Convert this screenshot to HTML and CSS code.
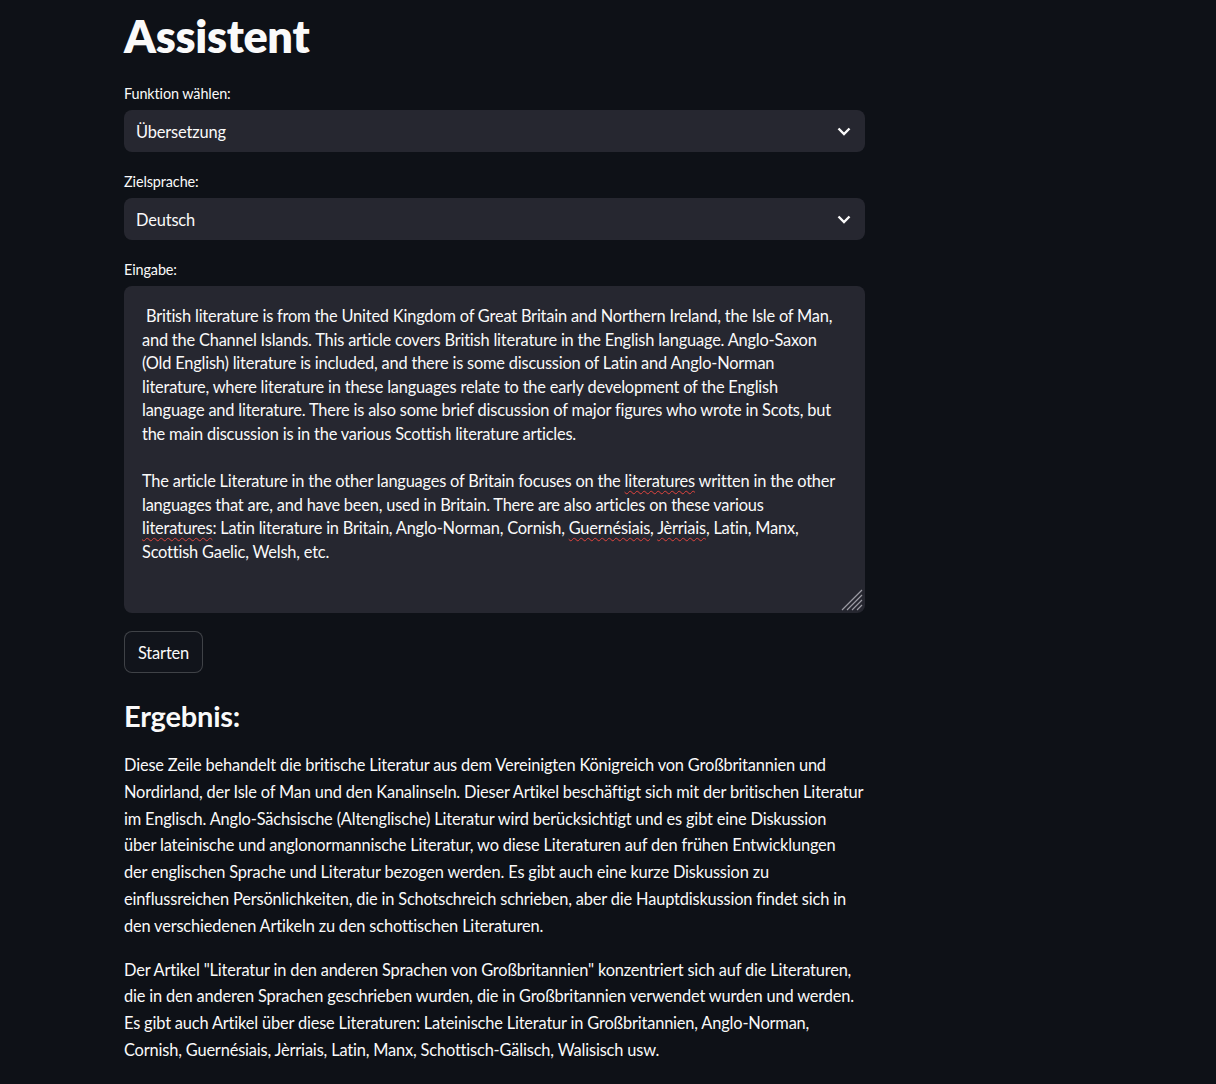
FILE: index.html
```html
<!DOCTYPE html>
<html lang="de">
<head>
<meta charset="utf-8">
<title>Assistent</title>
<link rel="stylesheet" href="styles.css">
</head>
<body>
<main class="main">
  <h1 class="title">Assistent</h1>

  <div class="field">
    <label class="label">Funktion wählen:</label>
    <div class="select">
      <span class="select-value">Übersetzung</span>
      <svg class="chevron" width="14" height="9" viewBox="0 0 14 9"><path d="M1.5 1.5 L7 7 L12.5 1.5" fill="none" stroke="#fafafa" stroke-width="2.4"/></svg>
    </div>
  </div>

  <div class="field">
    <label class="label">Zielsprache:</label>
    <div class="select">
      <span class="select-value">Deutsch</span>
      <svg class="chevron" width="14" height="9" viewBox="0 0 14 9"><path d="M1.5 1.5 L7 7 L12.5 1.5" fill="none" stroke="#fafafa" stroke-width="2.4"/></svg>
    </div>
  </div>

  <div class="field">
    <label class="label">Eingabe:</label>
    <div class="textarea" role="textbox" aria-multiline="true">
      <p class="ta-para">&nbsp;British literature is from the United Kingdom of Great Britain and Northern Ireland, the Isle of Man,<br>and the Channel Islands. This article covers British literature in the English language. Anglo-Saxon<br>(Old English) literature is included, and there is some discussion of Latin and Anglo-Norman<br>literature, where literature in these languages relate to the early development of the English<br>language and literature. There is also some brief discussion of major figures who wrote in Scots, but<br>the main discussion is in the various Scottish literature articles.</p>
      <p class="ta-para">The article Literature in the other languages of Britain focuses on the <span class="spell">literatures</span> written in the other<br>languages that are, and have been, used in Britain. There are also articles on these various<br><span class="spell">literatures</span>: Latin literature in Britain, Anglo-Norman, Cornish, <span class="spell">Guernésiais</span>, <span class="spell">Jèrriais</span>, Latin, Manx,<br>Scottish Gaelic, Welsh, etc.</p>
      <svg class="grip" width="22" height="22" viewBox="0 0 22 22"><path d="M21 6 L6 21 M21 11 L11 21 M21 16 L16 21 M21 1 L1 21" stroke="#9a9aa2" stroke-width="1.2" fill="none"/></svg>
    </div>
  </div>

  <button class="btn" type="button">Starten</button>

  <h3 class="subtitle">Ergebnis:</h3>
  <p class="result">Diese Zeile behandelt die britische Literatur aus dem Vereinigten Königreich von Großbritannien und<br>Nordirland, der Isle of Man und den Kanalinseln. Dieser Artikel beschäftigt sich mit der britischen Literatur<br>im Englisch. Anglo-Sächsische (Altenglische) Literatur wird berücksichtigt und es gibt eine Diskussion<br>über lateinische und anglonormannische Literatur, wo diese Literaturen auf den frühen Entwicklungen<br>der englischen Sprache und Literatur bezogen werden. Es gibt auch eine kurze Diskussion zu<br>einflussreichen Persönlichkeiten, die in Schotschreich schrieben, aber die Hauptdiskussion findet sich in<br>den verschiedenen Artikeln zu den schottischen Literaturen.</p>
  <p class="result">Der Artikel "Literatur in den anderen Sprachen von Großbritannien" konzentriert sich auf die Literaturen,<br>die in den anderen Sprachen geschrieben wurden, die in Großbritannien verwendet wurden und werden.<br>Es gibt auch Artikel über diese Literaturen: Lateinische Literatur in Großbritannien, Anglo-Norman,<br>Cornish, Guernésiais, Jèrriais, Latin, Manx, Schottisch-Gälisch, Walisisch usw.</p>
</main>
</body>
</html>
```

FILE: styles.css
```css
html, body {
  margin: 0;
  padding: 0;
  background: #0e1117;
  color: #fafafa;
  font-family: Lato, "Noto Sans", sans-serif;
  font-variant-ligatures: none;
}

.main {
  width: 741px;
  margin-left: 124px;
  display: flex;
  flex-direction: column;
  align-items: flex-start;
}

.title {
  margin: 9px 0 0;
  font-size: 45px;
  line-height: 55px;
  font-weight: 800;
  letter-spacing: -0.3px;
}

.field {
  width: 100%;
  display: flex;
  flex-direction: column;
  gap: 6px;
  margin-top: 20px;
}

.field + .field {
  margin-top: 20px;
}

.label {
  font-size: 14.4px;
  line-height: 20px;
  letter-spacing: -0.1px;
  color: #fafafa;
}

.select {
  box-sizing: border-box;
  height: 42px;
  background: #262730;
  border-radius: 8px;
  display: flex;
  align-items: center;
  justify-content: space-between;
  padding: 0 14px 0 12px;
  font-size: 16.4px;
  letter-spacing: -0.15px;
}

.chevron {
  display: block;
}

.textarea {
  position: relative;
  box-sizing: border-box;
  height: 327px;
  background: #262730;
  border-radius: 8px;
  padding: 18px 8px 0 18px;
  font-size: 16.4px;
  line-height: 23.6px;
  letter-spacing: -0.2px;
}

.ta-para {
  margin: 0 0 23.6px;
}

.spell {
  text-decoration: underline wavy #e0443e;
  text-decoration-thickness: 1px;
  text-underline-offset: 3px;
}

.grip {
  position: absolute;
  right: 2px;
  bottom: 2px;
}

.btn {
  margin-top: 18px;
  height: 42px;
  padding: 0 13px;
  background: #11141b;
  color: #fafafa;
  border: 1px solid rgba(250, 250, 250, 0.2);
  border-radius: 8px;
  font-family: inherit;
  font-size: 16.4px;
  letter-spacing: -0.15px;
}

.subtitle {
  margin: 25px 0 0;
  font-size: 29px;
  line-height: 36px;
  font-weight: 700;
  letter-spacing: -0.2px;
}

.result {
  margin: 18px 0 0;
  font-size: 16.4px;
  line-height: 26.8px;
  letter-spacing: -0.17px;
  white-space: nowrap;
}

.result + .result {
  margin-top: 17px;
}
```
